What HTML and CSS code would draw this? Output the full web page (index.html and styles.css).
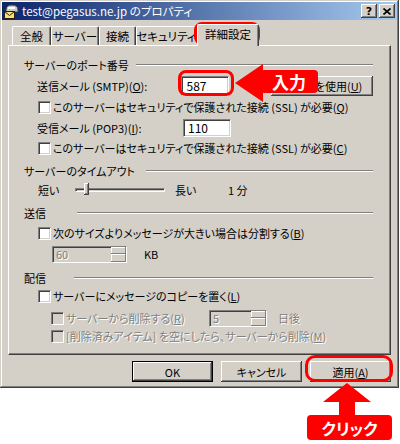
FILE: index.html
```html
<!DOCTYPE html>
<html lang="ja">
<head>
    <meta charset="UTF-8">
    <title>test@pegasus.ne.jp のプロパティ</title>
    <link rel="stylesheet" href="styles.css">
</head>
<body>
<div class="page">
    <!-- Ventana de propiedades -->
    <div class="window">
        <div class="titlebar">
            <svg class="app-icon" width="16" height="16" viewBox="0 0 16 16">
                <path d="M3 7 Q3 2 9 2 Q15 2 15 7 L15 9 L3 9 Z" fill="#c8c8c8" stroke="#404040" stroke-width="1"/>
                <rect x="5" y="4" width="7" height="2" fill="#ffffff"/>
                <rect x="1.5" y="8.5" width="10" height="7" fill="#ffe066" stroke="#202020" stroke-width="1"/>
                <path d="M1.5 8.5 L6.5 12.5 L11.5 8.5" fill="none" stroke="#202020" stroke-width="1"/>
            </svg>
            <span class="title">test@pegasus.ne.jp のプロパティ</span>
            <span class="cap-btn help">?</span>
            <span class="cap-btn close">
                <svg width="8" height="7" viewBox="0 0 8 7">
                    <path d="M0.5 0.5 L7.5 6.5 M7.5 0.5 L0.5 6.5" stroke="#000" stroke-width="1.6"/>
                </svg>
            </span>
        </div>

        <div class="tabs">
            <div class="tab t-general">全般</div>
            <div class="tab t-server">サーバー</div>
            <div class="tab t-conn">接続</div>
            <div class="tab t-sec">セキュリティ</div>
            <div class="tab t-adv active">詳細設定</div>
        </div>

        <div class="panel">
            <!-- Puertos -->
            <div class="legend first">
                <span class="legend-text w-port">サーバーのポート番号</span>
                <span class="rule"></span>
            </div>
            <div class="row field-row r-smtp">
                <span class="field-label">送信メール (SMTP)(<u>O</u>):</span>
                <span class="textbox">587</span>
                <span class="btn btn-default">既定値を使用(<u>U</u>)</span>
            </div>
            <div class="row check-row r-ssl1">
                <span class="check"></span>
                <span>このサーバーはセキュリティで保護された接続 (SSL) が必要(<u>Q</u>)</span>
            </div>
            <div class="row field-row r-pop">
                <span class="field-label">受信メール (POP3)(<u>I</u>):</span>
                <span class="textbox">110</span>
            </div>
            <div class="row check-row r-ssl2">
                <span class="check"></span>
                <span>このサーバーはセキュリティで保護された接続 (SSL) が必要(<u>C</u>)</span>
            </div>

            <!-- Tiempo de espera -->
            <div class="legend">
                <span class="legend-text w-timeout">サーバーのタイムアウト</span>
                <span class="rule"></span>
            </div>
            <div class="row slider-row">
                <span class="s-short">短い</span>
                <span class="slider"><span class="thumb"></span></span>
                <span class="s-long">長い</span>
                <span>1 分</span>
            </div>

            <!-- Envio -->
            <div class="legend">
                <span class="legend-text w-send">送信</span>
                <span class="rule"></span>
            </div>
            <div class="row check-row r-split">
                <span class="check"></span>
                <span>次のサイズよりメッセージが大きい場合は分割する(<u>B</u>)</span>
            </div>
            <div class="row spin-row r-kb">
                <span class="spin s-60 disabled"><span class="spin-val">60</span><span class="spin-btns"><i></i><i></i></span></span>
                <span>KB</span>
            </div>

            <!-- Entrega -->
            <div class="legend">
                <span class="legend-text w-deliver">配信</span>
                <span class="rule"></span>
            </div>
            <div class="row check-row r-copy">
                <span class="check"></span>
                <span>サーバーにメッセージのコピーを置く(<u>L</u>)</span>
            </div>
            <div class="row check-row sub r-del disabled">
                <span class="check"></span>
                <span class="del-label">サーバーから削除する(<u>R</u>)</span>
                <span class="spin s-5"><span class="spin-val">5</span><span class="spin-btns"><i></i><i></i></span></span>
                <span class="days">日後</span>
            </div>
            <div class="row check-row sub r-empty disabled">
                <span class="check"></span>
                <span>[削除済みアイテム] を空にしたら、サーバーから削除(<u>M</u>)</span>
            </div>
        </div>

        <div class="buttons">
            <span class="btn btn-ok">OK</span>
            <span class="btn">キャンセル</span>
            <span class="btn">適用(<u>A</u>)</span>
        </div>
    </div>

    <!-- Anotaciones rojas -->
    <div class="mark mark-tab"></div>
    <div class="mark mark-port"></div>
    <div class="mark mark-apply"></div>

    <svg class="arrow-left" width="30" height="38" viewBox="0 0 30 38">
        <polygon points="0,19 28,0 28,38" fill="#ff0000"/>
    </svg>
    <div class="callout callout-input">入力</div>

    <svg class="arrow-up" width="48" height="34" viewBox="0 0 48 34">
        <polygon points="24,0 48,19 32,19 32,34 16,34 16,19 0,19" fill="#ff0000"/>
    </svg>
    <div class="callout callout-click">クリック</div>
</div>
</body>
</html>
```

FILE: styles.css
```css
* {
    box-sizing: border-box;
}

body {
    margin: 0;
    background-color: #fff;
    font-family: "Noto Sans CJK JP", sans-serif;
    font-size: 11px;
    font-feature-settings: "palt";
    color: #000;
    white-space: nowrap;
}

u {
    text-decoration: underline;
    text-underline-offset: 1px;
}

.page {
    position: relative;
    width: 400px;
    height: 444px;
}

/* Ventana */
.window {
    width: 399px;
    height: 388px;
    padding: 2px;
    background-color: #d4d0c8;
    box-shadow: inset -1px -1px #404040, inset 1px 1px #d4d0c8,
                inset -2px -2px #808080, inset 2px 2px #fff;
}

.titlebar {
    height: 18px;
    display: flex;
    align-items: center;
    padding: 0 2px 0 1px;
    background: linear-gradient(to right, #0a246a, #a6caf0);
    color: #fff;
    font-size: 11.5px;
}

.app-icon {
    margin-right: 3px;
}

.title {
    flex: 1;
    line-height: 14px;
}

.cap-btn {
    width: 16px;
    height: 14px;
    display: flex;
    align-items: center;
    justify-content: center;
    background-color: #d4d0c8;
    color: #000;
    font-family: "DejaVu Sans", sans-serif;
    font-weight: bold;
    font-size: 11px;
    box-shadow: inset -1px -1px #404040, inset 1px 1px #fff,
                inset -2px -2px #808080;
}

.cap-btn.close {
    margin-left: 2px;
}

/* Pestanas */
.tabs {
    display: flex;
    align-items: flex-end;
    height: 23px;
    margin-top: 2px;
    padding-left: 10px;
    font-size: 11.5px;
}

.tab {
    height: 19px;
    display: flex;
    align-items: center;
    justify-content: center;
    padding-bottom: 1px;
    border-top: 1px solid #fff;
    border-left: 1px solid #fff;
    border-right: 1px solid #404040;
    border-top-left-radius: 2px;
    border-top-right-radius: 2px;
    box-shadow: inset -1px 0 #808080;
}

.t-general { width: 39px; }
.t-server { width: 48px; }
.t-conn { width: 37px; }
.t-sec {
    width: 63px;
    padding-right: 3px;
}

.tab.active {
    width: 62px;
    height: 22px;
    margin-left: -2px;
    margin-bottom: -1px;
    background-color: #d4d0c8;
    position: relative;
    z-index: 1;
    padding-bottom: 3px;
}

/* Panel */
.panel {
    height: 310px;
    margin: 0 6px;
    padding: 12px 17px 0 15px;
    border-top: 1px solid #fff;
    border-left: 1px solid #fff;
    border-right: 1px solid #404040;
    border-bottom: 1px solid #404040;
    box-shadow: inset -1px -1px #808080;
}

.legend {
    height: 14px;
    display: flex;
    align-items: center;
    margin-top: 8px;
}

.legend.first {
    margin-top: 0;
}

.legend-text {
    line-height: 14px;
}

.w-port { width: 112px; }
.w-timeout { width: 122px; }
.w-send { width: 53px; }
.w-deliver { width: 50px; }

.rule {
    flex: 1;
    height: 2px;
    border-top: 1px solid #808080;
    border-bottom: 1px solid #fff;
}

.row {
    display: flex;
    align-items: center;
    height: 16px;
    padding-left: 13px;
}

.field-row {
    height: 20px;
}

.r-smtp { margin-top: 4px; }
.r-ssl1 { margin-top: 3px; }
.r-pop { margin-top: 3px; }
.r-ssl2 { margin-top: 2px; }
.slider-row { margin-top: 4px; }
.r-split { margin-top: 5px; }
.r-kb { margin-top: 4px; height: 18px; }
.r-copy { margin-top: 3px; }
.r-del { margin-top: 5px; height: 18px; }
.r-empty { margin-top: 1px; }

.field-label {
    width: 146px;
}

.textbox {
    width: 48px;
    height: 20px;
    padding: 2px 4px;
    line-height: 14px;
    font-size: 12px;
    background-color: #fff;
    border-top: 1px solid #808080;
    border-left: 1px solid #808080;
    border-right: 1px solid #fff;
    border-bottom: 1px solid #fff;
    box-shadow: inset 1px 1px #404040, inset -1px -1px #d4d0c8;
}

.r-pop .textbox {
    height: 18px;
    line-height: 12px;
    padding-top: 2px;
}

/* Casillas */
.check {
    width: 13px;
    height: 13px;
    margin: 0 2px 0 1px;
    flex-shrink: 0;
    background-color: #fff;
    border-top: 1px solid #808080;
    border-left: 1px solid #808080;
    border-right: 1px solid #fff;
    border-bottom: 1px solid #fff;
    box-shadow: inset 1px 1px #404040, inset -1px -1px #d4d0c8;
}

.sub {
    padding-left: 26px;
}

.disabled {
    color: #808080;
    text-shadow: 1px 1px 0 #fff;
}

.disabled .check {
    background-color: #d4d0c8;
}

.del-label {
    width: 143px;
}

.days {
    margin-left: 11px;
}

/* Deslizador */
.s-short {
    width: 38px;
    padding-left: 1px;
}

.slider {
    position: relative;
    width: 90px;
    height: 4px;
    border-top: 1px solid #808080;
    border-left: 1px solid #808080;
    border-bottom: 1px solid #fff;
    border-right: 1px solid #fff;
    box-shadow: inset 1px 1px #404040;
}

.thumb {
    position: absolute;
    left: 8px;
    top: -6px;
    width: 5px;
    height: 12px;
    background-color: #d4d0c8;
    box-shadow: inset -1px -1px #404040, inset 1px 1px #fff, inset -2px -2px #808080;
}

.s-long {
    width: 53px;
    margin-left: 10px;
}

/* Caja numerica */
.spin {
    display: flex;
    height: 17px;
    border-top: 1px solid #808080;
    border-left: 1px solid #808080;
    border-right: 1px solid #fff;
    border-bottom: 1px solid #fff;
    box-shadow: inset 1px 1px #404040;
    color: #808080;
}

.s-60 {
    width: 75px;
    margin-left: 15px;
    margin-right: 17px;
}

.s-5 {
    width: 58px;
    color: #808080;
}

.spin-val {
    flex: 1;
    padding: 0 3px;
    line-height: 15px;
}

.spin-btns {
    width: 15px;
    display: flex;
    flex-direction: column;
}

.spin-btns i {
    flex: 1;
    background-color: #d4d0c8;
    box-shadow: inset -1px -1px #808080, inset 1px 1px #fff;
}

/* Botones */
.buttons {
    display: flex;
    justify-content: flex-end;
    gap: 8px;
    margin-top: 6px;
    padding-right: 6px;
}

.btn {
    width: 81px;
    height: 21px;
    display: flex;
    align-items: center;
    justify-content: center;
    background-color: #d4d0c8;
    box-shadow: inset -1px -1px #404040, inset 1px 1px #fff,
                inset -2px -2px #808080;
}

.btn-ok {
    box-shadow: inset 0 0 0 1px #000, inset -2px -2px #404040,
                inset 2px 2px #fff, inset -3px -3px #808080;
}

.btn-default {
    width: 103px;
    height: 20px;
    margin-left: 42px;
}

/* Anotaciones */
.mark {
    position: absolute;
    border: 3px solid #ff0000;
    border-radius: 8px;
}

.mark-tab {
    left: 194px;
    top: 22px;
    width: 66px;
    height: 23px;
}

.mark-port {
    left: 178px;
    top: 70px;
    width: 56px;
    height: 26px;
}

.mark-apply {
    left: 305px;
    top: 355px;
    width: 88px;
    height: 27px;
    border-radius: 10px;
}

.arrow-left {
    position: absolute;
    left: 235px;
    top: 64px;
}

.arrow-up {
    position: absolute;
    left: 323px;
    top: 383px;
}

.callout {
    position: absolute;
    display: flex;
    align-items: center;
    justify-content: center;
    background-color: #ff0000;
    color: #fff;
    font-weight: bold;
    font-size: 17px;
    border-radius: 4px;
}

.callout-input {
    left: 260px;
    top: 70px;
    width: 58px;
    height: 23px;
}

.callout-click {
    left: 307px;
    top: 415px;
    width: 85px;
    height: 25px;
    font-size: 16px;
}
```
